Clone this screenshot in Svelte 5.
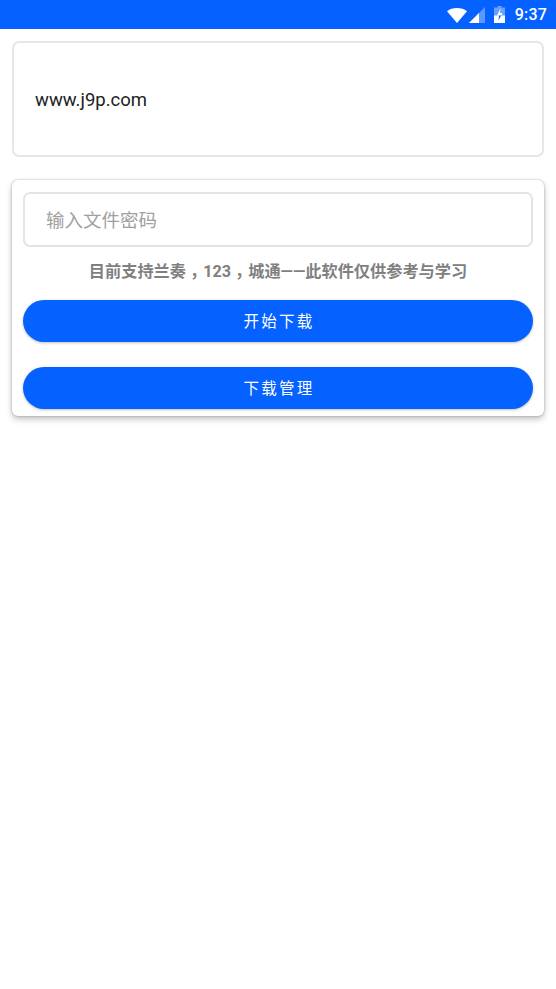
<script>
  const buttons = ['开始下载', '下载管理'];
</script>

<div class="screen">
  <div class="statusbar">
    <svg class="wifi" width="20" height="15" viewBox="0 0 20 15"><path d="M0 3.200C2.700 1.100 6.200 0 10 0s7.300 1.100 10 3.200L10 15z" fill="#fff"/></svg>
    <svg class="signal" width="16" height="16" viewBox="0 0 16 16"><path d="M16 0v16H0z" fill="#fff" fill-opacity="0.35"/><path d="M10 6v10H0z" fill="#fff"/></svg>
    <svg class="battery" width="11" height="17" viewBox="0 0 11 17">
      <path d="M3.500 0h4v1.500H11V17H0V1.500h3.500z" fill="#fff" fill-opacity="0.4"/>
      <path d="M0 9.500h11V17H0z" fill="#fff"/>
      <path d="M6.500 2.500 3 9.500h4.170L8.500 7H6z" fill="#fff"/>
      <path d="M5 9.500 4.500 14.500 7.170 9.500z" fill="#0561ff"/>
    </svg>
    <span class="time">9:37</span>
  </div>

  <div class="url-box">www.j9p.com</div>

  <div class="card">
    <input class="password" type="text" placeholder="输入文件密码" />
    <p class="hint">目前支持兰奏<span class="comma">，</span>123<span class="comma">，</span>城通——此软件仅供参考与学习</p>
    {#each buttons as label}
      <button class="action">{label}</button>
    {/each}
  </div>
</div>

<style>
  :global(body) {
    margin: 0;
    background: #fff;
  }

  .screen {
    height: 989px;
    overflow: hidden;
    font-family: Roboto, "Noto Sans CJK SC", sans-serif;
  }

  .statusbar {
    height: 29px;
    background: #0561ff;
    display: flex;
    align-items: center;
    justify-content: flex-end;
    padding-right: 9px;
    color: #fff;
  }

  .wifi {
    margin-right: 2px;
    margin-top: 1px;
  }

  .signal {
    margin-right: 9px;
  }

  .battery {
    margin-right: 10px;
  }

  .time {
    font-size: 16px;
    font-weight: 500;
    letter-spacing: 0.2px;
  }

  .url-box {
    margin: 12px 12px 0;
    height: 116px;
    box-sizing: border-box;
    border: 2px solid #e6e6e6;
    border-radius: 7px;
    padding: 1px 0 0 21px;
    display: flex;
    align-items: center;
    font-size: 18.500px;
    color: #222;
  }

  .card {
    margin: 23px 12px 0;
    height: 236px;
    box-sizing: border-box;
    border-radius: 6px;
    padding: 12px 11px 0;
    background: #fff;
    box-shadow: 0 0 2px rgba(0, 0, 0, 0.3), 0 3px 6px rgba(0, 0, 0, 0.25);
  }

  .password {
    display: block;
    width: 100%;
    height: 55px;
    box-sizing: border-box;
    border: 2px solid #e4e4e4;
    border-radius: 7px;
    padding: 2px 21px 0;
    outline: none;
    font: inherit;
    font-size: 18.500px;
    background: #fff;
  }

  .password::placeholder {
    color: #a0a0a0;
    opacity: 1;
  }

  .hint {
    margin: 14px 0 0;
    text-align: center;
    font-size: 16.200px;
    line-height: 22px;
    font-weight: 700;
    color: #808080;
  }

  /* comma glyph sits mid-way in its gap */
  .comma {
    padding-left: 4px;
    letter-spacing: -3px;
  }

  .action {
    display: block;
    width: 100%;
    height: 42px;
    margin-top: 25px;
    border: none;
    border-radius: 21px;
    padding: 0 0 3px 2px;
    background: #0561ff;
    color: #fff;
    font: inherit;
    font-size: 15.500px;
    letter-spacing: 2.200px;
    box-shadow: 0 1px 3px rgba(0, 0, 0, 0.25);
  }

  .hint + .action {
    margin-top: 17px;
  }
</style>
